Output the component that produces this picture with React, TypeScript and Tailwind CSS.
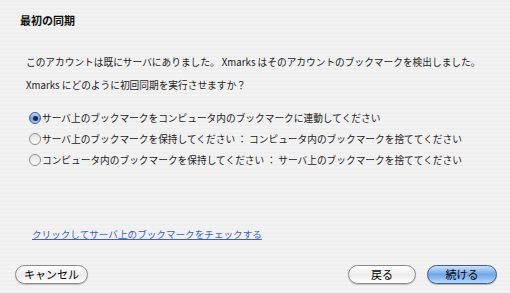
import React, { useState } from 'react';

const OPTIONS = [
  'サーバ上のブックマークをコンピュータ内のブックマークに連動してください',
  'サーバ上のブックマークを保持してください ： コンピュータ内のブックマークを捨ててください',
  'コンピュータ内のブックマークを保持してください ： サーバ上のブックマークを捨ててください',
];

function Radio({ checked }: { checked: boolean }) {
  return checked ? (
    <span className="w-[12px] h-[12px] rounded-full border border-[#3b5f9a] bg-gradient-to-b from-[#c9dcf5] via-[#6d9fe0] to-[#a9cdf6] flex items-center justify-center shrink-0">
      <span className="w-[5px] h-[5px] rounded-full bg-[#1d2a44]" />
    </span>
  ) : (
    <span className="w-[12px] h-[12px] rounded-full border border-[#8e8e8e] bg-gradient-to-b from-[#e2e2e2] to-[#ffffff] shrink-0" />
  );
}

function AquaButton({ label, primary, width }: { label: string; primary?: boolean; width: string }) {
  return (
    <button
      className={
        primary
          ? `${width} h-[19px] rounded-full border border-[#3d5e8f] bg-gradient-to-b from-[#cfe2fa] via-[#6fa5e6] to-[#b9dbff] text-[11px] text-black flex items-center justify-center shadow-[0_1px_1px_rgba(0,0,0,0.25)]`
          : `${width} h-[19px] rounded-full border border-[#8a8a8a] bg-gradient-to-b from-[#ffffff] via-[#ededed] to-[#fdfdfd] text-[11px] text-black flex items-center justify-center shadow-[0_1px_1px_rgba(0,0,0,0.2)]`
      }
    >
      {label}
    </button>
  );
}

export default function App() {
  const [selected, setSelected] = useState(0);

  return (
    <div
      className="w-[510px] h-[293px] flex flex-col text-[#222222] bg-[repeating-linear-gradient(to_bottom,#efefef_0px,#efefef_2px,#f3f3f3_2px,#f3f3f3_4px)]"
      style={{ fontFamily: '"Noto Sans CJK JP", "Liberation Sans", sans-serif' }}
    >
      {/* Title */}
      <h1 className="pl-[20px] pt-[12px] text-[11px] font-bold leading-[16px] text-[#111111]">最初の同期</h1>

      {/* Body */}
      <div className="pl-[26px] pt-[27px] text-[9.7px] leading-[14px]">
        <p>このアカウントは既にサーバにありました。 Xmarks はそのアカウントのブックマークを検出しました。</p>
        <p className="mt-[9px]">Xmarks にどのように初回同期を実行させますか？</p>
      </div>

      {/* Options */}
      <div className="pl-[29px] pt-[19px] flex flex-col gap-[7px] text-[9.7px] leading-[14px]">
        {OPTIONS.map((opt, i) => (
          <label key={i} className="flex items-center gap-[1px] cursor-default" onClick={() => setSelected(i)}>
            <Radio checked={selected === i} />
            <span>{opt}</span>
          </label>
        ))}
      </div>

      {/* Link */}
      <div className="pl-[32px] pt-[60px] text-[9.6px] leading-[14px]">
        <a className="text-[#3d5fc0] underline underline-offset-1">クリックしてサーバ上のブックマークをチェックする</a>
      </div>

      {/* Footer buttons */}
      <div className="flex items-center pl-[15px] pr-[13px] pt-[24px]">
        <AquaButton label="キャンセル" width="w-[73px]" />
        <div className="flex-1" />
        <AquaButton label="戻る" width="w-[68px]" />
        <div className="w-[11px]" />
        <AquaButton label="続ける" width="w-[70px]" primary />
      </div>
    </div>
  );
}
